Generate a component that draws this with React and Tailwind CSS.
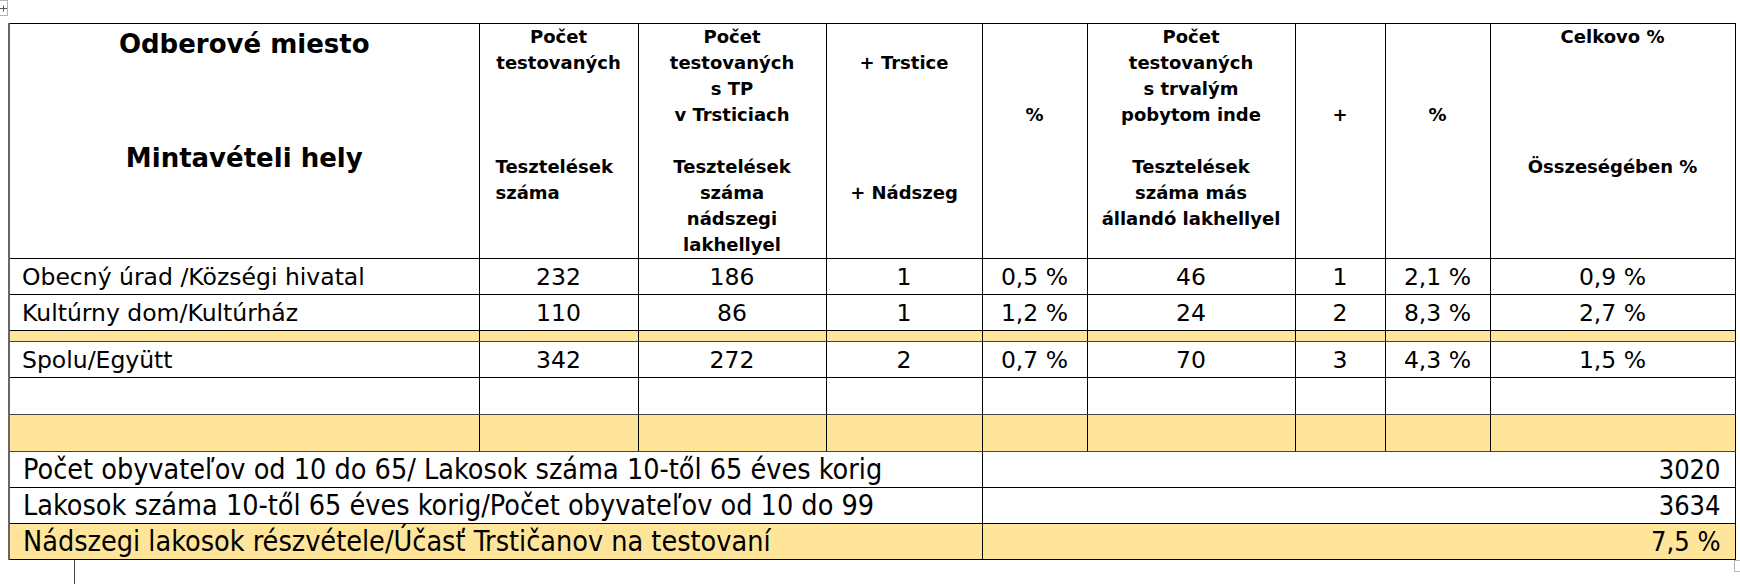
import React from "react";

const cols = [470, 159, 188, 156, 105, 208, 90, 105, 245];

// header column texts, one entry per 26px line; null = empty line
const Lines = ({ lines, className = "" }) => (
  <div className={`text-[18px] font-bold leading-[26px] ${className}`}>
    {lines.map((l, i) =>
      l === null ? <div key={i} className="h-[26px]" /> : <div key={i}>{l}</div>
    )}
  </div>
);

const rows = [
  ["Obecný úrad /Községi hivatal", "232", "186", "1", "0,5 %", "46", "1", "2,1 %", "0,9 %"],
  ["Kultúrny dom/Kultúrház", "110", "86", "1", "1,2 %", "24", "2", "8,3 %", "2,7 %"],
];

const sum = ["Spolu/Együtt", "342", "272", "2", "0,7 %", "70", "3", "4,3 %", "1,5 %"];

const cell = "border border-black p-0";
const yellow = "bg-[#ffe599]";

const DataRow = ({ data }) => (
  <tr className="h-[36px]">
    {data.map((v, i) => (
      <td
        key={i}
        className={`${cell} align-middle text-[23.5px] leading-[28px] ${i === 0 ? "text-left pl-[12px] border-l-2 border-l-[#666]" : "text-center"}`}
      >
        {v}
      </td>
    ))}
  </tr>
);

const EmptyRow = ({ h, bg = "" }) => (
  <tr className={h}>
    {cols.map((_, i) => (
      <td key={i} className={`${cell} ${bg} ${i === 0 ? "border-l-2 border-l-[#666]" : ""} border-y-[#444]`} />
    ))}
  </tr>
);

const SummaryRow = ({ label, value, bg = "" }) => (
  <tr className="h-[36px]">
    <td colSpan={4} className={`${cell} ${bg} border-l-2 border-l-[#666] pl-[13px] text-left align-middle font-['DejaVu_Sans_Condensed',sans-serif] text-[28.5px] leading-[28px]`}>
      {label}
    </td>
    <td colSpan={5} className={`${cell} ${bg} pr-[14px] text-right align-middle font-['DejaVu_Sans_Condensed',sans-serif] text-[27px] leading-[28px]`}>
      {value}
    </td>
  </tr>
);

export default function App() {
  return (
    <div className="relative h-[584px] w-[1740px] bg-white pl-[8px] pt-[23px] font-['DejaVu_Sans',sans-serif] text-black">
      {/* table move handle */}
      <div className="absolute left-0 top-0 flex h-[16px] w-[8px] items-center justify-end border border-l-0 border-[#b5b5b5] bg-white">
        <svg width="7" height="7" viewBox="0 0 7 7">
          <path d="M0 3.5h7M3.5 0.5v6" stroke="#555" strokeWidth="1" />
        </svg>
      </div>

      <table className="table-fixed border-collapse" style={{ width: 1726 }}>
        <colgroup>
          {cols.map((w, i) => (
            <col key={i} style={{ width: w }} />
          ))}
        </colgroup>
        <tbody>
          <tr className="h-[233px]">
            <td className={`${cell} border-l-2 border-l-[#666] align-top text-center`}>
              <div className="text-[26px] font-bold leading-[40px]">Odberové miesto</div>
              <div className="mt-[74px] text-[26px] font-bold leading-[40px]">Mintavételi hely</div>
            </td>
            <td className={`${cell} align-top`}>
              <Lines className="text-center" lines={["Počet", "testovaných"]} />
              <Lines className="mt-[78px] pl-[16px] text-left" lines={["Tesztelések", "száma"]} />
            </td>
            <td className={`${cell} align-top text-center`}>
              <Lines
                lines={["Počet", "testovaných", "s TP", "v Trsticiach", null, "Tesztelések", "száma", "nádszegi", "lakhellyel"]}
              />
            </td>
            <td className={`${cell} align-top text-center`}>
              <Lines lines={[null, "+ Trstice", null, null, null, null, "+ Nádszeg"]} />
            </td>
            <td className={`${cell} align-top text-center`}>
              <Lines lines={[null, null, null, "%"]} />
            </td>
            <td className={`${cell} align-top text-center`}>
              <Lines
                lines={["Počet", "testovaných", "s trvalým", "pobytom inde", null, "Tesztelések", "száma más", "állandó lakhellyel"]}
              />
            </td>
            <td className={`${cell} align-top text-center`}>
              <Lines lines={[null, null, null, "+"]} />
            </td>
            <td className={`${cell} align-top text-center`}>
              <Lines lines={[null, null, null, "%"]} />
            </td>
            <td className={`${cell} align-top text-center`}>
              <Lines lines={["Celkovo %", null, null, null, null, "Összeségében %"]} />
            </td>
          </tr>

          {rows.map((r, i) => (
            <DataRow key={i} data={r} />
          ))}
          <EmptyRow h="h-[11px]" bg={yellow} />
          <DataRow data={sum} />
          <EmptyRow h="h-[37px]" />
          <EmptyRow h="h-[37px]" bg={yellow} />

          <SummaryRow label="Počet obyvateľov od 10 do 65/ Lakosok száma 10-től 65 éves korig" value="3020" />
          <SummaryRow label="Lakosok száma 10-től 65 éves korig/Počet obyvateľov od 10 do 99" value="3634" />
          <SummaryRow label="Nádszegi lakosok részvétele/Účasť Trstičanov na testovaní" value="7,5 %" bg={yellow} />
        </tbody>
      </table>

      {/* text cursor below the table */}
      <div className="ml-[66px] h-[25px] w-px bg-[#444]" />
      {/* resize handle */}
      <div className="absolute right-0 top-[560px] h-[12px] w-[6px] border border-r-0 border-[#b5b5b5] bg-white" />
    </div>
  );
}
